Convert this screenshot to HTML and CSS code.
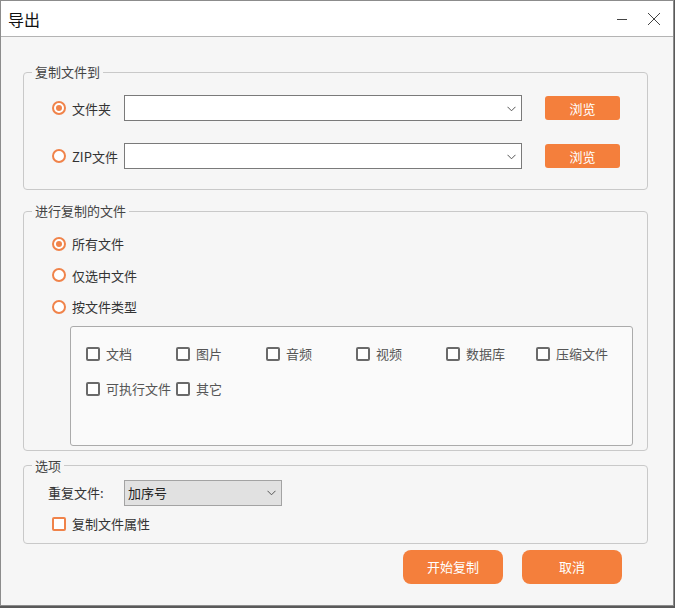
FILE: index.html
```html
<!DOCTYPE html>
<html lang="zh-CN">
<head>
<meta charset="utf-8">
<title>导出</title>
<link rel="stylesheet" href="styles.css">
</head>
<body>
<div class="window">
  <div class="titlebar">
    <span class="title">导出</span>
    <div class="controls">
      <svg class="ctl" width="14" height="14" viewBox="0 0 14 14"><line x1="1" y1="7.5" x2="11" y2="7.5" stroke="#444" stroke-width="1"/></svg>
      <svg class="ctl" width="14" height="14" viewBox="0 0 14 14"><path d="M1 1 L13 13 M13 1 L1 13" stroke="#444" stroke-width="1" fill="none"/></svg>
    </div>
  </div>
  <div class="content">
    <fieldset class="group g1">
      <legend>复制文件到</legend>
      <div class="g1-body">
        <div class="dest-row">
          <label class="choice"><span class="radio checked"></span><span>文件夹</span></label>
          <div class="select wide"><span class="sel-text"></span><svg class="chev" width="9" height="6" viewBox="0 0 9 6"><polyline points="0.5,0.8 4.5,4.8 8.5,0.8" fill="none" stroke="#555" stroke-width="1"/></svg></div>
          <button class="btn-small">浏览</button>
        </div>
        <div class="dest-row">
          <label class="choice"><span class="radio"></span><span>ZIP文件</span></label>
          <div class="select wide"><span class="sel-text"></span><svg class="chev" width="9" height="6" viewBox="0 0 9 6"><polyline points="0.5,0.8 4.5,4.8 8.5,0.8" fill="none" stroke="#555" stroke-width="1"/></svg></div>
          <button class="btn-small">浏览</button>
        </div>
      </div>
    </fieldset>

    <fieldset class="group g2">
      <legend>进行复制的文件</legend>
      <div class="g2-body">
        <label class="choice row"><span class="radio checked"></span><span>所有文件</span></label>
        <label class="choice row"><span class="radio"></span><span>仅选中文件</span></label>
        <label class="choice row"><span class="radio"></span><span>按文件类型</span></label>
        <div class="types">
          <label class="cb"><span class="box"></span><span>文档</span></label>
          <label class="cb"><span class="box"></span><span>图片</span></label>
          <label class="cb"><span class="box"></span><span>音频</span></label>
          <label class="cb"><span class="box"></span><span>视频</span></label>
          <label class="cb"><span class="box"></span><span>数据库</span></label>
          <label class="cb"><span class="box"></span><span>压缩文件</span></label>
          <label class="cb"><span class="box"></span><span>可执行文件</span></label>
          <label class="cb"><span class="box"></span><span>其它</span></label>
        </div>
      </div>
    </fieldset>

    <fieldset class="group g3">
      <legend>选项</legend>
      <div class="g3-body">
        <div class="dup-row">
          <span class="dup-label">重复文件:</span>
          <div class="select gray"><span class="sel-text">加序号</span><svg class="chev" width="9" height="6" viewBox="0 0 9 6"><polyline points="0.5,0.8 4.5,4.8 8.5,0.8" fill="none" stroke="#555" stroke-width="1"/></svg></div>
        </div>
        <label class="choice attr"><span class="obox"></span><span>复制文件属性</span></label>
      </div>
    </fieldset>

    <div class="actions">
      <button class="btn-big">开始复制</button>
      <button class="btn-big">取消</button>
    </div>
  </div>
</div>
</body>
</html>
```

FILE: styles.css
```css
* { box-sizing: border-box; }
html, body { margin: 0; padding: 0; }
body {
  background: #5a5a5a;
  font-family: "Noto Sans CJK SC", "Noto Sans", "Liberation Sans", sans-serif;
  font-size: 13px;
  color: #333;
}
.window {
  width: 674px;
  height: 606px;
  border: 1px solid #8c8c8c;
  background: #f6f6f6;
  display: flex;
  flex-direction: column;
}
.titlebar {
  height: 36px;
  background: #fff;
  border-bottom: 1px solid #b4b4b4;
  display: flex;
  align-items: center;
  justify-content: space-between;
  padding: 0 0 0 7px;
  flex: none;
}
.title {
  font-size: 16px;
  color: #111;
  line-height: 20px;
}
.controls {
  display: flex;
  align-items: center;
  gap: 17px;
  padding-right: 12px;
}
.ctl { display: block; }
.content {
  padding: 0 25px 0 22px;
  flex: 1;
  display: flex;
  flex-direction: column;
}
.group {
  margin: 0;
  padding: 0;
  min-width: 0;
  border: 1px solid #c9c9c9;
  border-radius: 4px;
}
.group legend {
  margin-left: 8px;
  padding: 0 3px;
  font-size: 13px;
  line-height: 18px;
  color: #444;
}
.g1 { margin-top: 26px; }
.g1-body {
  padding: 14px 0 20px 28px;
  display: flex;
  flex-direction: column;
  gap: 22px;
}
.dest-row {
  display: flex;
  align-items: center;
  height: 26px;
}
.choice {
  display: flex;
  align-items: center;
  gap: 6px;
  color: #333;
  white-space: nowrap;
}
.dest-row .choice { width: 72px; flex: none; }
.radio {
  width: 14px;
  height: 14px;
  border: 2px solid #f0834a;
  border-radius: 50%;
  background: #fff;
  display: flex;
  align-items: center;
  justify-content: center;
  flex: none;
}
.radio.checked::after {
  content: "";
  width: 6px;
  height: 6px;
  border-radius: 50%;
  background: #f0834a;
}
.select {
  height: 26px;
  border: 1px solid #7a7a7a;
  background: #fff;
  display: flex;
  align-items: center;
  justify-content: space-between;
  padding: 0 5px 0 3px;
  color: #222;
}
.select.wide { width: 398px; }
.select.gray {
  width: 158px;
  background: #e1e1e1;
  border-color: #a3a3a3;
}
.chev { display: block; margin-top: 1px; }
.btn-small {
  margin-left: 23px;
  width: 75px;
  height: 24px;
  border: none;
  border-radius: 3px;
  background: #f47f3c;
  color: #fff;
  font-family: inherit;
  font-size: 13px;
  padding: 0;
}
.g2 { margin-top: 12px; }
.g2-body {
  padding: 8px 14px 4px 28px;
  display: flex;
  flex-direction: column;
}
.row { height: 31.5px; }
.types {
  margin: 3px 0 0 18px;
  height: 120px;
  border: 1px solid #ababab;
  border-radius: 3px;
  background: #fafafa;
  padding: 17px 0 0 15px;
  display: grid;
  grid-template-columns: repeat(6, 90px);
  grid-auto-rows: 20px;
  row-gap: 15px;
  align-content: start;
}
.cb {
  display: flex;
  align-items: center;
  gap: 6px;
  color: #555;
  white-space: nowrap;
}
.box {
  width: 14px;
  height: 14px;
  border: 2px solid #6a6a6a;
  border-radius: 2px;
  background: #fff;
  flex: none;
}
.g3 { margin-top: 6px; }
.g3-body {
  padding: 5px 0 9px 24px;
  display: flex;
  flex-direction: column;
}
.dup-row {
  display: flex;
  align-items: center;
}
.dup-label { width: 76px; color: #333; }
.attr {
  margin: 8px 0 0 4px;
  height: 20px;
}
.obox {
  width: 14px;
  height: 14px;
  border: 2px solid #f0834a;
  border-radius: 2px;
  background: #fff;
  flex: none;
}
.actions {
  margin-top: 6px;
  display: flex;
  justify-content: flex-end;
  gap: 19px;
  padding-right: 26px;
}
.btn-big {
  width: 100px;
  height: 34px;
  border: none;
  border-radius: 8px;
  background: #f47f3c;
  color: #fff;
  font-family: inherit;
  font-size: 13px;
  padding: 0;
}
```
